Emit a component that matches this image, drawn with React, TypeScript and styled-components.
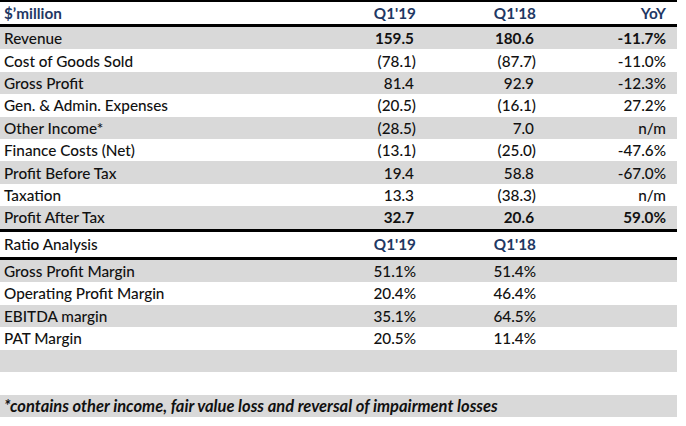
import React from "react";
import styled, { createGlobalStyle } from "styled-components";

const Global = createGlobalStyle`
  html, body { margin: 0; padding: 0; background: #fff; }
  body { font-family: Lato, "Open Sans", sans-serif; }
`;

const Table = styled.div`
  width: 677px;
  border-top: 2px solid #000;
  color: #111;
  font-size: 15.3px;
`;

const Row = styled.div<{ $shade?: boolean; $h?: number }>`
  display: grid;
  grid-template-columns: 336px 80px 120px 130px;
  padding-right: 11px;
  height: ${(p) => p.$h ?? 22.4}px;
  align-items: center;
  background: ${(p) => (p.$shade ? "#d9d9d9" : "#fff")};
`;

const Rule = styled.div`
  height: 3px;
  background: #000;
`;

const Label = styled.div<{ $head?: boolean }>`
  padding-left: 4px;
  white-space: nowrap;
  font-weight: ${(p) => (p.$head ? 700 : 500)};
  color: ${(p) => (p.$head ? "#1f3864" : "#111")};
`;

const Num = styled.div<{ $bold?: boolean; $head?: boolean; $pad?: boolean }>`
  text-align: right;
  white-space: nowrap;
  font-weight: ${(p) => (p.$bold || p.$head ? 700 : 500)};
  color: ${(p) => (p.$head ? "#1f3864" : "#111")};
  padding-right: ${(p) => (p.$pad ? 2 : 0)}px;
`;

const Note = styled.div`
  padding-left: 4px;
  font-size: 16.5px;
  font-weight: 700;
  font-style: italic;
  white-space: nowrap;
  grid-column: 1 / -1;
`;

type R = { label: string; a: string; b: string; c: string; bold?: boolean };

const pl: R[] = [
  { label: "Revenue", a: "159.5", b: "180.6", c: "-11.7%", bold: true },
  { label: "Cost of Goods Sold", a: "(78.1)", b: "(87.7)", c: "-11.0%" },
  { label: "Gross Profit", a: "81.4", b: "92.9", c: "-12.3%" },
  { label: "Gen. & Admin. Expenses", a: "(20.5)", b: "(16.1)", c: "27.2%" },
  { label: "Other Income*", a: "(28.5)", b: "7.0", c: "n/m" },
  { label: "Finance Costs (Net)", a: "(13.1)", b: "(25.0)", c: "-47.6%" },
  { label: "Profit Before Tax", a: "19.4", b: "58.8", c: "-67.0%" },
  { label: "Taxation", a: "13.3", b: "(38.3)", c: "n/m" },
  { label: "Profit After Tax", a: "32.7", b: "20.6", c: "59.0%", bold: true },
];

const ratios = [
  { label: "Gross Profit Margin", a: "51.1%", b: "51.4%" },
  { label: "Operating Profit Margin", a: "20.4%", b: "46.4%" },
  { label: "EBITDA margin", a: "35.1%", b: "64.5%" },
  { label: "PAT Margin", a: "20.5%", b: "11.4%" },
];

const pad = (v: string) => !v.endsWith(")") && !v.endsWith("%");

export default function App() {
  return (
    <>
      <Global />
      <Table>
        <Row $h={22}>
          <Label $head>$’million</Label>
          <Num $head>Q1'19</Num>
          <Num $head>Q1'18</Num>
          <Num $head>YoY</Num>
        </Row>
        <Rule />
        {pl.map((r, i) => (
          <Row key={r.label} $shade={i % 2 === 0}>
            <Label>{r.label}</Label>
            <Num $bold={r.bold} $pad={pad(r.a)}>{r.a}</Num>
            <Num $bold={r.bold} $pad={pad(r.b)}>{r.b}</Num>
            <Num $bold={r.bold}>{r.c}</Num>
          </Row>
        ))}
        <Rule />
        <Row $h={25}>
          <Label>Ratio Analysis</Label>
          <Num $head>Q1'19</Num>
          <Num $head>Q1'18</Num>
          <div />
        </Row>
        <Rule />
        {ratios.map((r, i) => (
          <Row key={r.label} $shade={i % 2 === 0} $h={22.5}>
            <Label>{r.label}</Label>
            <Num>{r.a}</Num>
            <Num>{r.b}</Num>
            <div />
          </Row>
        ))}
        <Row $shade $h={22.5} />
        <Row $h={22.5} />
        <Row $shade $h={22.5}>
          <Note>*contains other income, fair value loss and reversal of impairment losses</Note>
        </Row>
      </Table>
    </>
  );
}
